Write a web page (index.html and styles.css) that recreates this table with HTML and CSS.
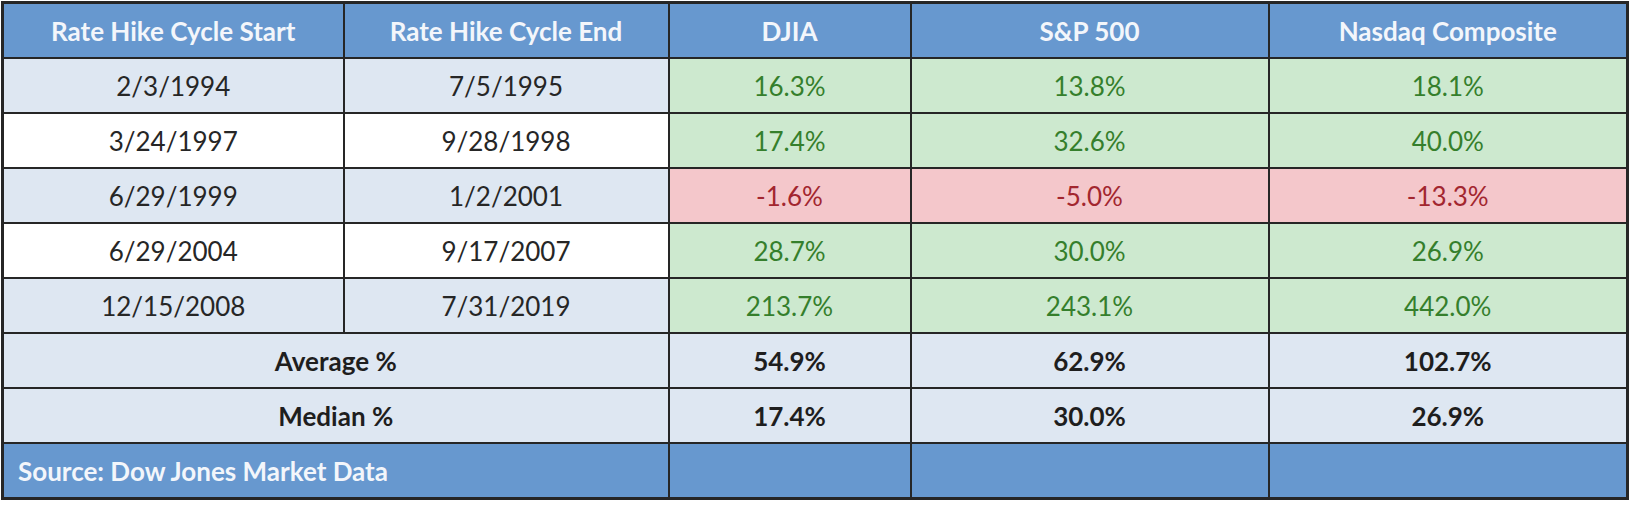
FILE: index.html
```html
<!DOCTYPE html>
<html>
<head>
<meta charset="utf-8">
<link rel="stylesheet" href="styles.css">
</head>
<body>
<table class="grid">
  <colgroup>
    <col class="c1"><col class="c2"><col class="c3"><col class="c4"><col class="c5">
  </colgroup>
  <tr class="head">
    <th>Rate Hike Cycle Start</th>
    <th>Rate Hike Cycle End</th>
    <th>DJIA</th>
    <th>S&amp;P 500</th>
    <th>Nasdaq Composite</th>
  </tr>
  <tr class="shade">
    <td>2/3/1994</td><td>7/5/1995</td>
    <td class="up">16.3%</td><td class="up">13.8%</td><td class="up">18.1%</td>
  </tr>
  <tr class="plain">
    <td>3/24/1997</td><td>9/28/1998</td>
    <td class="up">17.4%</td><td class="up">32.6%</td><td class="up">40.0%</td>
  </tr>
  <tr class="shade">
    <td>6/29/1999</td><td>1/2/2001</td>
    <td class="down">-1.6%</td><td class="down">-5.0%</td><td class="down">-13.3%</td>
  </tr>
  <tr class="plain">
    <td>6/29/2004</td><td>9/17/2007</td>
    <td class="up">28.7%</td><td class="up">30.0%</td><td class="up">26.9%</td>
  </tr>
  <tr class="shade">
    <td>12/15/2008</td><td>7/31/2019</td>
    <td class="up">213.7%</td><td class="up">243.1%</td><td class="up">442.0%</td>
  </tr>
  <tr class="shade summary">
    <td colspan="2">Average %</td>
    <td>54.9%</td><td>62.9%</td><td>102.7%</td>
  </tr>
  <tr class="shade summary">
    <td colspan="2">Median %</td>
    <td>17.4%</td><td>30.0%</td><td>26.9%</td>
  </tr>
  <tr class="foot">
    <td colspan="2" class="source">Source: Dow Jones Market Data</td>
    <td></td><td></td><td></td>
  </tr>
</table>
</body>
</html>
```

FILE: styles.css
```css
html, body {
  margin: 0;
  padding: 0;
  background: #ffffff;
}

body {
  padding: 1px 0 0 1px;
  font-family: Lato, "Open Sans", "Liberation Sans", sans-serif;
}

.grid {
  border-collapse: collapse;
  table-layout: fixed;
  width: 1627px;
  border: 3px solid #262626;
}

.c1 { width: 341px; }
.c2 { width: 325px; }
.c3 { width: 242px; }
.c4 { width: 358px; }
.c5 { width: 359px; }

.grid th,
.grid td {
  border: 2px solid #262626;
  height: 53px;
  padding: 0;
  text-align: center;
  vertical-align: middle;
  font-size: 26px;
  color: #262626;
}

.head th {
  background: #6798cf;
  color: #f3f6fb;
  font-weight: 700;
}

.shade td { background: #dee7f2; }
.plain td { background: #ffffff; }

.grid td.up {
  background: #cde9cf;
  color: #357f2c;
}

.grid td.down {
  background: #f4c7cb;
  color: #a2262f;
}

.summary td {
  font-weight: 700;
  color: #1e1e1e;
}

.foot td {
  background: #6798cf;
}

.grid td.source {
  text-align: left;
  padding-left: 14px;
  color: #f3f6fb;
  font-weight: 700;
}
```
